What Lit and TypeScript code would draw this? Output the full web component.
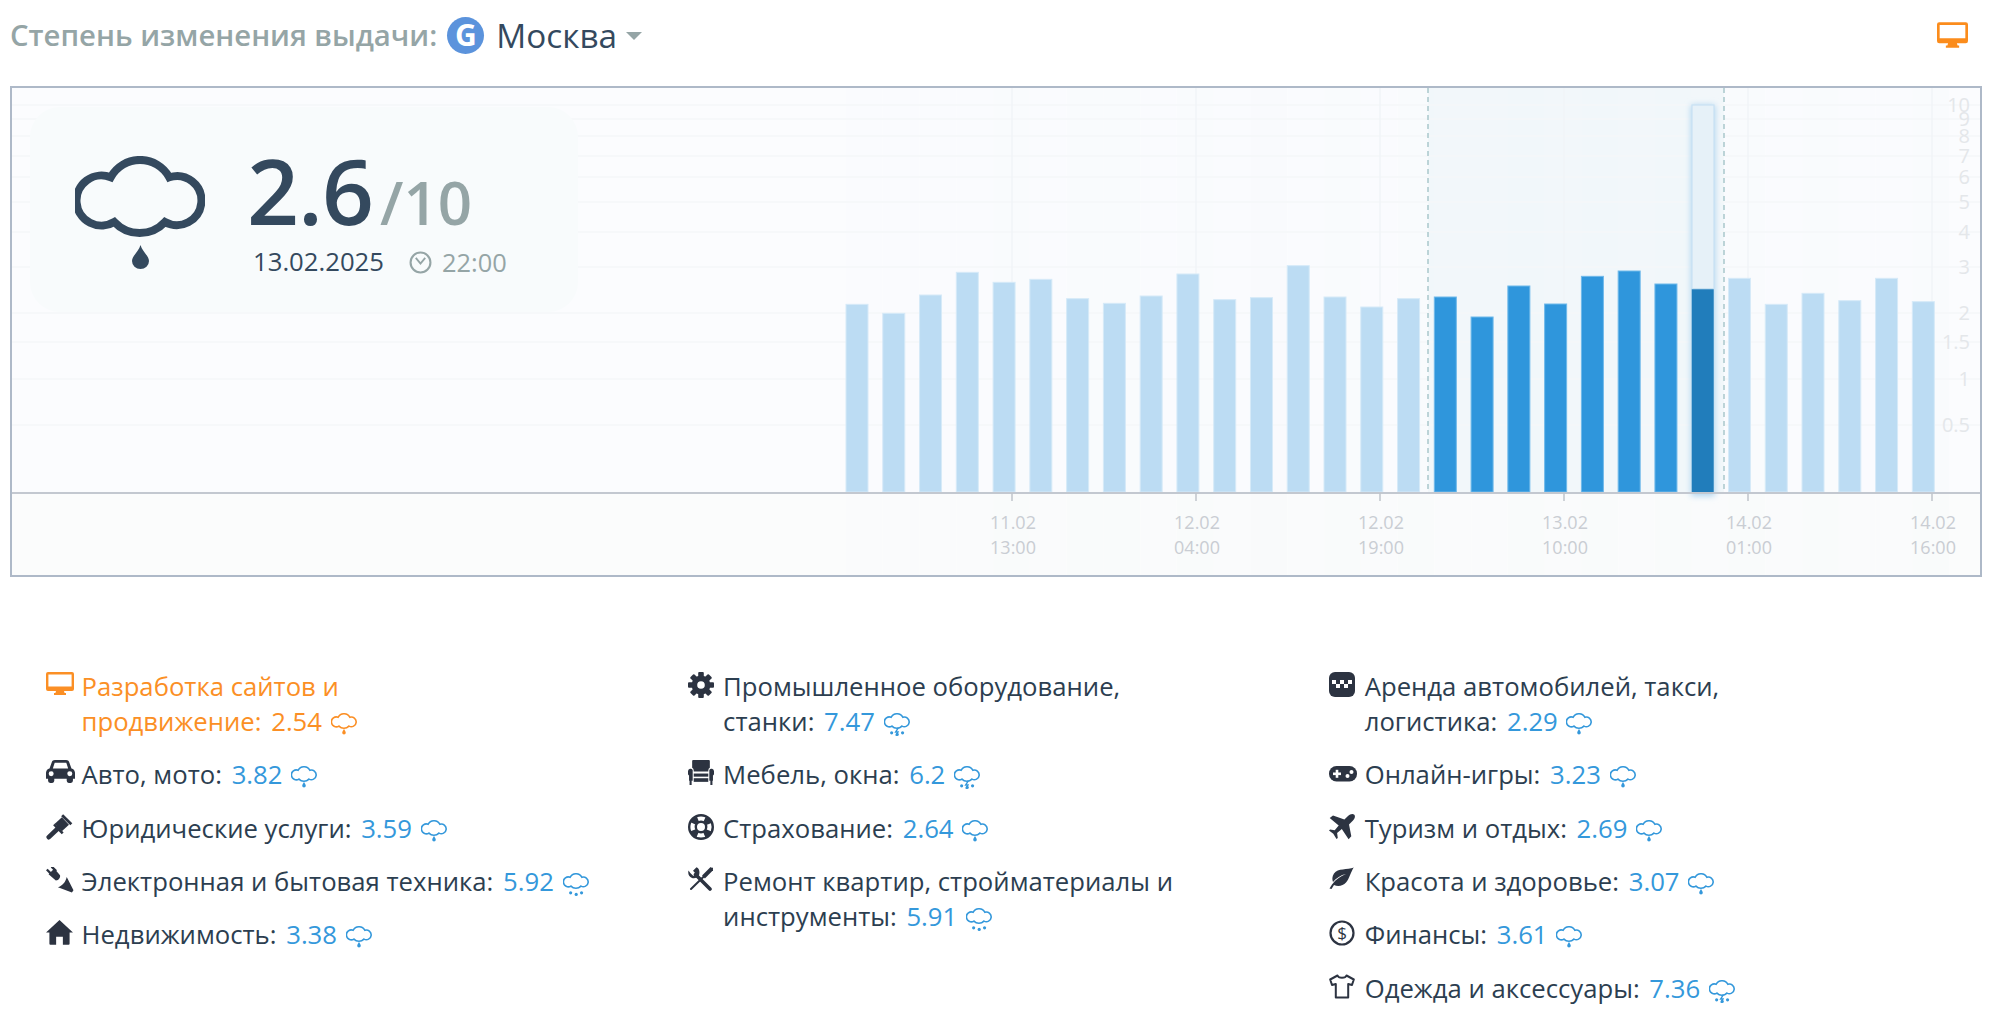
import { LitElement, html, css, svg } from "lit";
import { customElement } from "lit/decorators.js";

const icons: Record<string, any> = {
  desktop: svg`<svg viewBox="0 0 28 23" width="28" height="23" class="ic"><path fill="currentColor" fill-rule="evenodd" d="M2 0h24a2 2 0 0 1 2 2v15a2 2 0 0 1-2 2h-8l.6 2H20v2H8v-2h1.4l.6-2H2a2 2 0 0 1-2-2V2a2 2 0 0 1 2-2zM2.400 2.400v12h23.200v-12z"/></svg>`,
  car: svg`<svg viewBox="0 0 28 22" width="29" height="23" class="ic"><path fill="currentColor" fill-rule="evenodd" d="M5.5 2.2C6 .8 7.2 0 8.6 0h10.8c1.4 0 2.6.8 3.1 2.2L24.6 8C26.7 8.5 28 10.2 28 12.3V18h-2v2a2 2 0 0 1-2 2h-2a2 2 0 0 1-2-2v-2H8v2a2 2 0 0 1-2 2H4a2 2 0 0 1-2-2v-2H0v-5.7C0 10.2 1.3 8.5 3.4 8zM8.4 2.6 6.6 8h14.8l-1.8-5.4zM5 10.8a2.4 2.4 0 1 0 0 4.8 2.4 2.4 0 0 0 0-4.8zM23 10.8a2.4 2.4 0 1 0 0 4.8 2.4 2.4 0 0 0 0-4.8z"/></svg>`,
  gavel: svg`<svg viewBox="0 0 26 24" width="28" height="26" class="ic"><g fill="none" stroke="currentColor"><path d="M2.600 21.400 12 12.400" stroke-width="4.400" stroke-linecap="round"/><path d="M11.500 6 18 13" stroke-width="9"/><path d="M15 1 23.500 9.500" stroke-width="2.600"/><path d="M7.500 9.500 15.500 18" stroke-width="2.400"/></g></svg>`,
  plug: svg`<svg viewBox="0 0 27 25" width="28" height="26" class="ic"><g fill="currentColor"><path d="M0 3.200 1.600 1.600 6 6 4.400 7.600zM4.600.4 6.200-1.200 10.600 3.200 9 4.800z"/><path d="M2.500 7 8 1.500 13.500 8C14 10 12.500 13 9.500 13z"/><path d="M20 9.500 26.500 22.500 25 24.500 11.500 19.500C15.500 18 19 14.500 20 9.500z"/></g></svg>`,
  home: svg`<svg viewBox="0 0 28 26" width="27" height="25" class="ic"><path fill="currentColor" d="M14 0 28 13h-3.500v11.800a1 1 0 0 1-1 1H17.500v-8.300h-7v8.300H4.500a1 1 0 0 1-1-1V13H0z"/></svg>`,
  cog: svg`<svg viewBox="-13 -13 26 26" width="26" height="26" class="ic"><circle r="6.600" fill="none" stroke="currentColor" stroke-width="5.600"/>${[0,45,90,135,180,225,270,315].map(a=>svg`<rect x="-2.800" y="-13" width="5.600" height="6" rx="1" fill="currentColor" transform="rotate(${a})"/>`)}</svg>`,
  chair: svg`<svg viewBox="0 0 25 24" width="26" height="25" class="ic"><g fill="currentColor"><path d="M4 1a1 1 0 0 1 1-1h15a1 1 0 0 1 1 1v6.500a3 3 0 0 0-1.500 2.500v1H5.500v-1A3 3 0 0 0 4 7.500z"/><path d="M0 10.500a2.500 2.500 0 0 1 4.500-1V20h-1v4H1.500v-4H1v-5a4 4 0 0 1-1-4.500zM25 10.500a2.500 2.500 0 0 0-4.500-1V20h1v4h2v-4h.5v-5a4 4 0 0 0 1-4.500z"/><rect x="5.500" y="13" width="14" height="3"/><rect x="5.500" y="17.500" width="14" height="3.500"/></g></svg>`,
  life: svg`<svg viewBox="-13 -13 26 26" width="26" height="26" class="ic"><circle r="11.800" fill="none" stroke="currentColor" stroke-width="2.400"/><circle r="5.200" fill="none" stroke="currentColor" stroke-width="2.400"/><circle r="8.500" fill="none" stroke="currentColor" stroke-width="7" stroke-dasharray="6.500 6.850" stroke-dashoffset="-3.420"/></svg>`,
  tools: svg`<svg viewBox="0 0 25 24" width="25" height="24" class="ic"><g fill="none" stroke="currentColor" stroke-linecap="round"><path d="M7.500 7.500 22 22" stroke-width="3.600"/><path d="M24 1.500 3 22" stroke-width="2"/><path d="M24 1.500 15.500 10" stroke-width="4" stroke-linecap="butt"/></g><path fill="currentColor" d="M8.500 .2 5 3.700l2.800 3-2.400 2.400L2.300 6.100 .5 3.500C-.3 7 .8 10 4 11c1.500.400 3.200.300 4.800-.5L11 8.300C12 5 11.500 1.300 8.500.2z"/></svg>`,
  taxi: svg`<svg viewBox="0 0 26 25" width="26" height="25" class="ic"><rect width="26" height="25" rx="6" fill="currentColor"/><g fill="#fff"><rect x="3" y="8" width="4" height="4"/><rect x="11" y="8" width="4" height="4"/><rect x="19" y="8" width="4" height="4"/><rect x="7" y="12" width="4" height="4"/><rect x="15" y="12" width="4" height="4"/></g></svg>`,
  game: svg`<svg viewBox="0 0 28 16" width="28" height="16" class="ic game"><rect width="28" height="15.500" rx="7.500" fill="currentColor"/><g fill="#fff"><rect x="4" y="6.500" width="8" height="2.600"/><rect x="6.700" y="3.800" width="2.600" height="8"/><circle cx="18.500" cy="10" r="2"/><circle cx="22.500" cy="6" r="2"/></g></svg>`,
  plane: svg`<svg viewBox="0 0 26 26" width="26" height="26" class="ic"><path fill="currentColor" d="M25.300.7c-1.500-1.300-4.400-.6-6.300 1.300l-3.600 3.600L4 1.500 .7 4l9 7.500-4 4.700-4.600-.700L0 16.600l4.300 3.200L7.500 25l1.300-1.100-.7-4.800 4.700-4 6.800 10.200 2.700-3L20 10.500l4-4c1.900-1.900 2.500-4.500 1.300-5.800z"/></svg>`,
  leaf: svg`<svg viewBox="0 0 25 22" width="25" height="22" class="ic"><path fill="currentColor" fill-rule="evenodd" d="M25 .5C18 3 9 1 5 6.500c-2 2.800-2 6.200-1 8.500C7 11 12 8 17 7c-5 2-10 5-14 10.500L.5 21.500l2 .5 2.500-4c4 2 9 1 12-2.500 3.500-4 4.500-10 8-15.500z"/></svg>`,
  dollar: svg`<svg viewBox="-13 -13 26 26" width="26" height="26" class="ic"><circle r="11.500" fill="none" stroke="currentColor" stroke-width="2.200"/><text x="0" y="6.200" text-anchor="middle" fill="currentColor" font-size="17" font-family="Open Sans">$</text></svg>`,
  shirt: svg`<svg viewBox="0 0 26 25" width="26" height="25" class="ic"><path fill="none" stroke="currentColor" stroke-width="2" stroke-linejoin="round" d="M8.500 1.500 1.200 5.500 3 11l3.800-1V23.500H19.200V10L23 11 24.800 5.500 17.500 1.500C16.500 4.500 9.500 4.500 8.500 1.500z"/></svg>`,
  clock: svg`<svg viewBox="0 0 22 22" width="23" height="23"><circle cx="11" cy="11" r="9.500" fill="none" stroke="currentColor" stroke-width="2"/><path d="M6.500 6.500 11 12l4.500-5.500" fill="none" stroke="currentColor" stroke-width="1.800"/></svg>`,
};

const CLOUD = "M35.7 21.3A33.400 33.400 0 0 1 94.300 21.300A24.500 24.500 0 1 1 90 66A34.700 34.700 0 0 1 39.300 66A25 25 0 1 1 35.700 21.300Z";

function miniCloud(v: number) {
  const rain = v >= 5;
  const bolt = v >= 6;
  return svg`<svg class="cloud" viewBox="0 0 130 116" width="26" height="23"><path d=${CLOUD} fill="none" stroke="currentColor" stroke-width="8"/>
  ${rain
    ? svg`<g fill="currentColor"><circle cx="38" cy="100" r="8"/><circle cx="66" cy="108" r="8"/><circle cx="93" cy="100" r="8"/></g>`
    : svg`<path d="M65 80C67 88 74 92 74 100a9 9 0 0 1-18 0C56 92 63 88 65 80z" fill="currentColor"/>`}
  ${bolt ? svg`<path d="M72 74 58 96 70 96 60 115" fill="none" stroke="currentColor" stroke-width="7"/>` : null}
  </svg>`;
}

const tops = [193,220,165,97,127,118,176,190,168,102,179,173,77,171,201,176,171,231,138,192,109,93,132,146,115,193,160,182,115,185];
const gridY: [string, number][] = [["10",105],["9",119],["8",136],["7",156],["6",177],["5",202],["4",232],["3",267],["2",313],["1.5",342],["1",379],["0.5",425]];
const ticks: [number,string,string][] = [[1012,"11.02","13:00"],[1196,"12.02","04:00"],[1380,"12.02","19:00"],[1564,"13.02","10:00"],[1748,"14.02","01:00"],[1932,"14.02","16:00"]];
const shades = [.002,.002,.004,.004,.009,.003,.006,.009,.003,.007,.005,.010,.003,.007,.004,.008,.005,.003,.009,.005,.007,.003,.008,.004,.007,.003,.009,.005,.003,.007];

type Item = { icon: string; label: string; value: number; text: string; active?: boolean };
const columns: Item[][] = [
  [
    { icon: "desktop", label: "Разработка сайтов и продвижение", value: 2.54, text: "2.54", active: true },
    { icon: "car", label: "Авто, мото", value: 3.82, text: "3.82" },
    { icon: "gavel", label: "Юридические услуги", value: 3.59, text: "3.59" },
    { icon: "plug", label: "Электронная и бытовая техника", value: 5.92, text: "5.92" },
    { icon: "home", label: "Недвижимость", value: 3.38, text: "3.38" },
  ],
  [
    { icon: "cog", label: "Промышленное оборудование, станки", value: 7.47, text: "7.47" },
    { icon: "chair", label: "Мебель, окна", value: 6.2, text: "6.2" },
    { icon: "life", label: "Страхование", value: 2.64, text: "2.64" },
    { icon: "tools", label: "Ремонт квартир, стройматериалы и инструменты", value: 5.91, text: "5.91" },
  ],
  [
    { icon: "taxi", label: "Аренда автомобилей, такси, логистика", value: 2.29, text: "2.29" },
    { icon: "game", label: "Онлайн-игры", value: 3.23, text: "3.23" },
    { icon: "plane", label: "Туризм и отдых", value: 2.69, text: "2.69" },
    { icon: "leaf", label: "Красота и здоровье", value: 3.07, text: "3.07" },
    { icon: "dollar", label: "Финансы", value: 3.61, text: "3.61" },
    { icon: "shirt", label: "Одежда и аксессуары", value: 7.36, text: "7.36" },
  ],
];

@customElement("app-root")
export class AppRoot extends LitElement {
  static styles = css`
    :host { display: block; width: 1999px; height: 1022px; overflow: hidden; background: #fff; font-family: "Open Sans", sans-serif; color: #2c3e50; }
    .head { display: flex; align-items: center; height: 70px; margin-bottom: 16px; padding: 0 31px 0 10px; box-sizing: border-box; }
    .title { font-size: 29.3px; font-weight: 600; color: #95a5a6; }
    .g { width: 37px; height: 37px; border-radius: 50%; background: #5b93dc; color: #fff; display: flex; align-items: center; justify-content: center; font-size: 30px; font-weight: 700; margin-left: 10px; line-height: 1; }
    .city { font-size: 33.3px; color: #34495e; margin-left: 12px; }
    .caret { width: 0; height: 0; border-left: 8px solid transparent; border-right: 8px solid transparent; border-top: 8px solid #95a5a6; margin-left: 9px; margin-top: 2px; }
    .spacer { flex: 1; }
    .device { color: #fb8c1c; display: flex; }
    .device svg { width: 31px; height: 28px; }
    .chart { position: relative; width: 1972px; height: 491px; margin-left: 10px; box-sizing: border-box; border: 2px solid #aeb9c8; background: #fbfcfd; }
    .chart > svg { display: block; }
    .yl { font-size: 20px; fill: #e4e7ea; text-anchor: end; }
    .xl { font-size: 18px; fill: #c9cdd3; text-anchor: middle; }
    .card { position: absolute; left: 18px; top: 19px; width: 548px; height: 205px; box-sizing: border-box; border-radius: 30px; background: #f8fbfc; display: flex; padding: 49px 0 0 45px; }
    .big { width: 130px; height: 114px; flex: none; color: #34495e; }
    .info { margin-left: 42px; margin-top: -23px; }
    .score { display: flex; align-items: baseline; height: 114px; }
    .num { font-size: 91px; font-weight: 600; color: #34495e; line-height: 114px; letter-spacing: -1px; }
    .max { font-size: 60px; font-weight: 600; color: #95a5a6; margin-left: 7px; }
    .stamp { display: flex; align-items: center; font-size: 25.7px; color: #34495e; margin: -2px 0 0 6px; line-height: 34px; }
    .time { display: flex; align-items: center; color: #95a5a6; margin-left: 25px; gap: 10px; font-size: 25.4px; }
    .list { display: grid; grid-template-columns: repeat(3, 641.6px); padding: 92px 0 0 46px; }
    .col { display: flex; flex-direction: column; gap: 18.35px; }
    .item { display: flex; font-size: 25.7px; line-height: 35px; color: #2c3e50; }
    .ico { flex: none; width: 35.5px; color: #2c3341; display: flex; align-items: flex-start; padding-top: 3px; height: 32px; }
    .game { margin-top: 6px; }
    .txt { max-width: 530px; }
    .nw { white-space: nowrap; }
    .val { color: #3498db; margin-left: 3px; }
    .cloud { vertical-align: -5px; margin-left: 2px; color: #3498db; }
    .active, .active .ico, .active .val, .active .cloud { color: #fb8f25; }
  `;

  render() {
    return html`
      <div class="head">
        <span class="title">Степень изменения выдачи:</span>
        <span class="g">G</span>
        <span class="city">Москва</span>
        <span class="caret"></span>
        <span class="spacer"></span>
        <span class="device">${icons.desktop}</span>
      </div>
      <div class="chart">
        ${this.renderChart()}
        <div class="card">
          <svg class="big" viewBox="0 0 130 114"><path d=${CLOUD} fill="none" stroke="currentColor" stroke-width="8"/><path d="M65.500 89C67 95 74 100 74 105a8.500 8 0 0 1-17 0C57 100 64 95 65.500 89z" fill="currentColor"/></svg>
          <div class="info">
            <div class="score"><span class="num">2.6</span><span class="max">/10</span></div>
            <div class="stamp"><span>13.02.2025</span><span class="time">${icons.clock}<span>22:00</span></span></div>
          </div>
        </div>
      </div>
      <div class="list">
        ${columns.map(col => html`<div class="col">
          ${col.map(it => {
            const cut = it.label.lastIndexOf(" ");
            const head = cut > 0 ? it.label.slice(0, cut + 1) : "";
            const tail = cut > 0 ? it.label.slice(cut + 1) : it.label;
            return html`<div class="item ${it.active ? "active" : ""}">
            <span class="ico">${icons[it.icon]}</span>
            <span class="txt">${head}<span class="nw">${tail}: <span class="val">${it.text}</span> ${miniCloud(it.value)}</span></span>
          </div>`;
          })}
        </div>`)}
      </div>`;
  }

  renderChart() {
    const P = 36.77;
    return svg`<svg viewBox="12 88 1968 487" width="1968" height="487">
      <defs><filter id="gl" x="-50%" y="-5%" width="200%" height="110%"><feGaussianBlur stdDeviation="3"/></filter>
      <filter id="sf" x="-20%" y="-2%" width="140%" height="104%"><feGaussianBlur stdDeviation=".7"/></filter></defs>
      <rect x="12" y="88" width="1968" height="487" fill="#fbfcfe"/>
      <rect x="12" y="493" width="1968" height="82" fill="#fbfcfc"/>
      ${tops.map((_, i) => svg`<rect x=${846 + P * i} y="88" width=${P} height="487" fill="#34708c" opacity=${shades[i]}/>`)}
      <rect x="1428" y="88" width="296" height="405" fill="#eef5f8" opacity=".7"/>
      ${gridY.map(([, y]) => svg`<line x1="12" x2="1980" y1=${y} y2=${y} stroke="#f4f7f9" stroke-width="1.500"/>`)}
      ${ticks.map(([x]) => svg`<line x1=${x} x2=${x} y1="88" y2="493" stroke="#f1f5f7" stroke-width="1.500"/>`)}
      <rect x="1691" y="105" width="24" height="391" fill="#aed4ef" filter="url(#gl)"/>
      ${tops.map((t, i) => {
        const x = 846 + P * i, y = 240 + t / 3;
        const dark = i >= 16 && i < 24;
        const fill = i === 23 ? "#217dbb" : dark ? "#2f96dc" : "#bcdcf3";
        const stroke = i === 23 ? "none" : dark ? "#6fb9ea" : "#d6eaf8";
        return svg`<rect x=${x} y=${y} width="22" height=${492 - y} fill=${fill} stroke=${stroke} stroke-width="1"/>`;
      })}
      <rect x="1692" y="105" width="22" height="${240 + 146 / 3 - 105}" fill="#e6f1f8" stroke="#c9e2f3" stroke-width="1.200" filter="url(#sf)"/>
      <line x1="1428" x2="1428" y1="88" y2="493" stroke="#a9c8cc" stroke-width="1.500" stroke-dasharray="5 4"/>
      <line x1="1724" x2="1724" y1="88" y2="493" stroke="#a9c8cc" stroke-width="1.500" stroke-dasharray="5 4"/>
      <line x1="12" x2="1980" y1="493" y2="493" stroke="#c3c8d0" stroke-width="2"/>
      ${ticks.map(([x, a, b]) => svg`<line x1=${x} x2=${x} y1="493" y2="501" stroke="#bfc4cb" stroke-width="1.500"/>
        <text class="xl" x=${x + 1} y="529">${a}</text><text class="xl" x=${x + 1} y="554">${b}</text>`)}
      ${gridY.map(([l, y]) => svg`<text class="yl" x="1970" y=${y + 7}>${l}</text>`)}
    </svg>`;
  }
}
